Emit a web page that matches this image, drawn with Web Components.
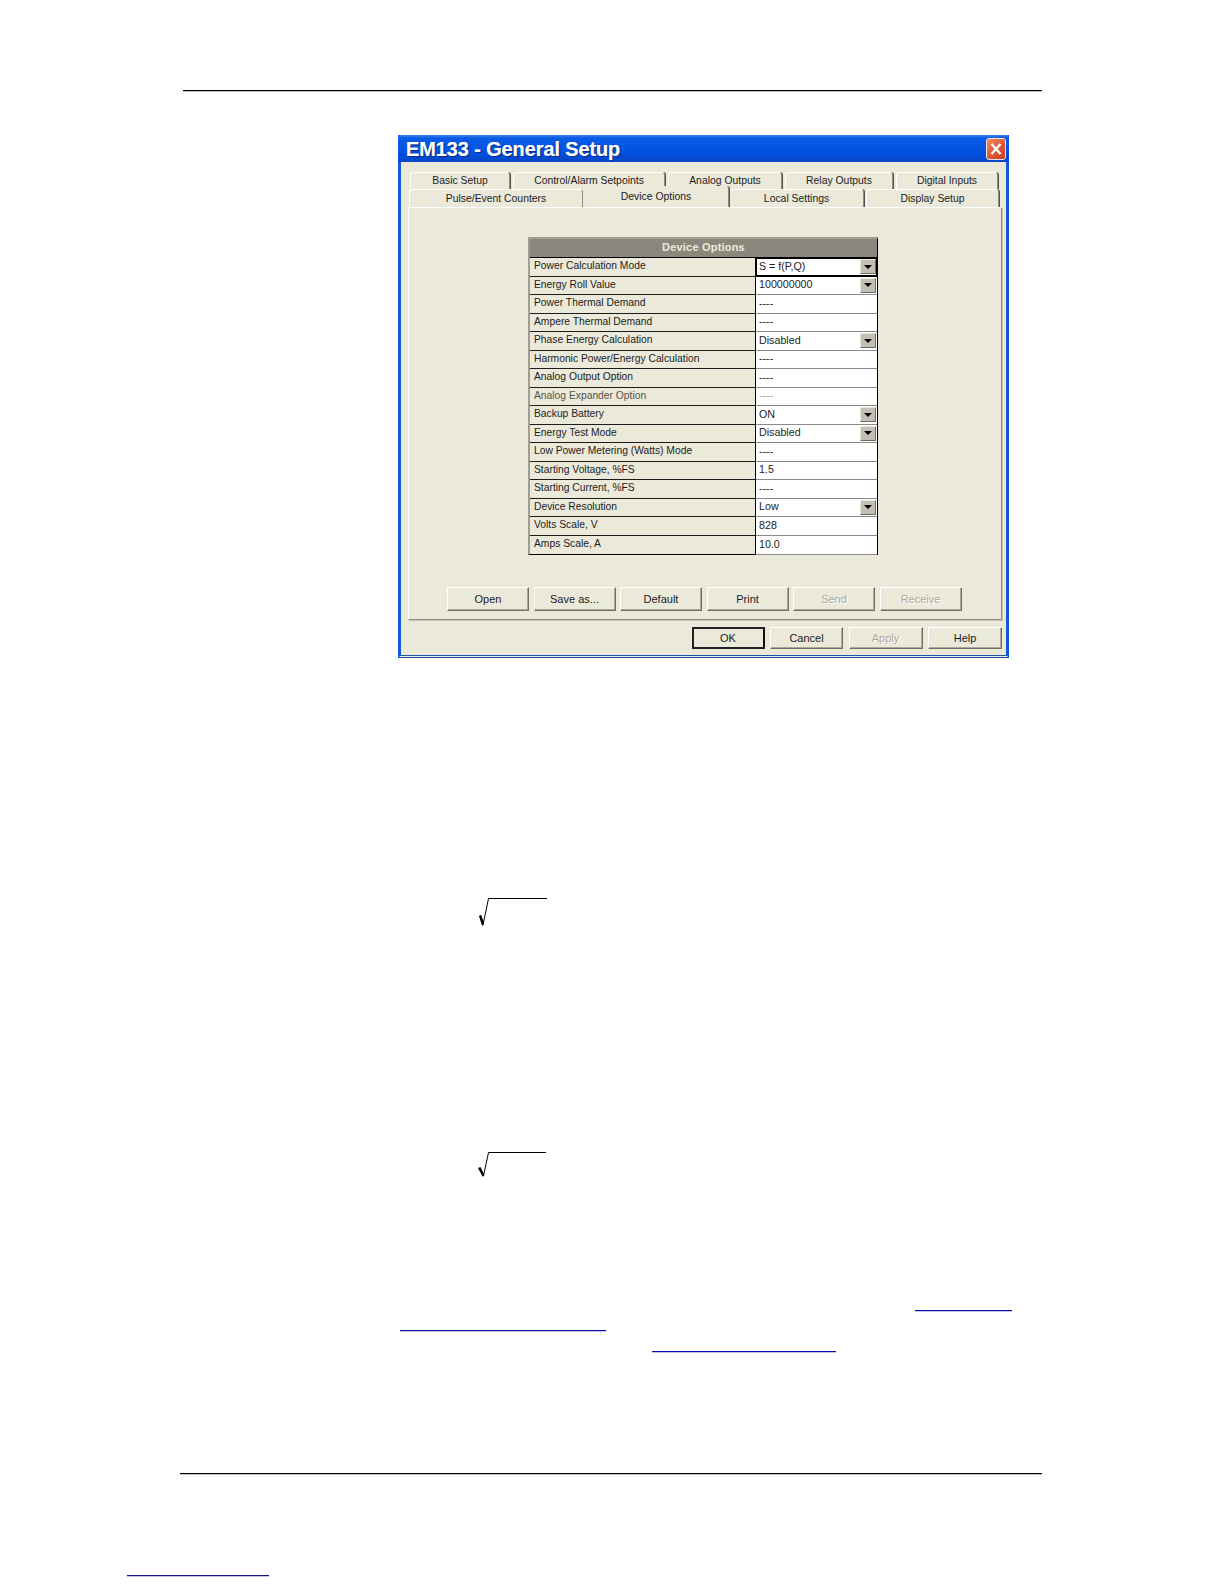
<!DOCTYPE html>
<html>
<head>
<meta charset="utf-8">
<title>EM133 - General Setup</title>
<style>
  html, body { margin: 0; padding: 0; background: #fff; }
  body { font-family: "Liberation Sans", Arial, sans-serif; }
</style>
</head>
<body>
<doc-page>
  <setup-dialog heading="EM133 - General Setup">
    <tab-strip slot="tabs"></tab-strip>
    <option-table heading="Device Options">
      <option-row label="Power Calculation Mode" value="S = f(P,Q)" combo focused></option-row>
      <option-row label="Energy Roll Value" value="100000000" combo></option-row>
      <option-row label="Power Thermal Demand" value="----"></option-row>
      <option-row label="Ampere Thermal Demand" value="----"></option-row>
      <option-row label="Phase Energy Calculation" value="Disabled" combo></option-row>
      <option-row label="Harmonic Power/Energy Calculation" value="----"></option-row>
      <option-row label="Analog Output Option" value="----"></option-row>
      <option-row label="Analog Expander Option" value="----" muted></option-row>
      <option-row label="Backup Battery" value="ON" combo></option-row>
      <option-row label="Energy Test Mode" value="Disabled" combo></option-row>
      <option-row label="Low Power Metering (Watts) Mode" value="----"></option-row>
      <option-row label="Starting Voltage, %FS" value="1.5"></option-row>
      <option-row label="Starting Current, %FS" value="----"></option-row>
      <option-row label="Device Resolution" value="Low" combo></option-row>
      <option-row label="Volts Scale, V" value="828"></option-row>
      <option-row label="Amps Scale, A" value="10.0"></option-row>
    </option-table>
    <win-button slot="actions">Open</win-button>
    <win-button slot="actions">Save as...</win-button>
    <win-button slot="actions">Default</win-button>
    <win-button slot="actions">Print</win-button>
    <win-button slot="actions" disabled>Send</win-button>
    <win-button slot="actions" disabled>Receive</win-button>
    <win-button slot="footer" default style="width:73px">OK</win-button>
    <win-button slot="footer" style="width:73px">Cancel</win-button>
    <win-button slot="footer" disabled style="width:74px">Apply</win-button>
    <win-button slot="footer" style="width:74px">Help</win-button>
  </setup-dialog>
</doc-page>

<script>
class DocPage extends HTMLElement {
  constructor() {
    super();
    this.attachShadow({ mode: 'open' });
    this.shadowRoot.innerHTML = `
      <style>
        :host { display: block; width: 1224px; height: 1584px; overflow: hidden; background: #fff; }
        .rule { height: 1px; background: #000; box-shadow: 0 1px 0 rgba(0,0,0,.25); }
        .top { margin: 90px 0 0 183px; width: 859px; }
        .dialog { margin: 44px 0 0 398px; width: 611px; }
        .root { display: block; width: 70px; height: 30px; margin-left: 478px; }
        .root.one { margin-top: 239px; }
        .root.two { margin-top: 224px; }
        .link { height: 1px; background: #0c0ca8; box-shadow: 0 1px 0 rgba(12,12,168,.25); }
        .l1 { margin: 129px 0 0 915px; width: 97px; }
        .l2 { margin: 19px 0 0 400px; width: 206px; }
        .l3 { margin: 20px 0 0 652px; width: 184px; }
        .bottom { margin: 121px 0 0 180px; width: 862px; }
        .l4 { margin: 101px 0 0 127px; width: 142px; background: #14148c; }
      </style>
      <div class="rule top"></div>
      <div class="dialog"><slot></slot></div>
      <svg class="root one" viewBox="0 0 70 30"><path d="M5 28 L10.500 1.500 H69" fill="none" stroke="#000" stroke-width="1"/><path d="M1 19 L3 17.800 L5.800 25 L5 28.500 L4 28.500 Z" fill="#000"/></svg>
      <svg class="root two" viewBox="0 0 70 30"><path d="M5.500 25 L10.500 1.500 H68" fill="none" stroke="#000" stroke-width="1"/><path d="M0 17 L2.400 16 L6 23 L5.500 25.500 L4.500 25.500 Z" fill="#000"/></svg>
      <div class="link l1"></div>
      <div class="link l2"></div>
      <div class="link l3"></div>
      <div class="rule bottom"></div>
      <div class="link l4"></div>
    `;
  }
}

class SetupDialog extends HTMLElement {
  constructor() {
    super();
    this.attachShadow({ mode: 'open' });
    const heading = this.getAttribute('heading') || '';
    this.shadowRoot.innerHTML = `
      <style>
        :host {
          display: block; box-sizing: border-box; width: 611px; height: 523px;
          background: #ebe9da; border: solid #1259d6; border-width: 0 3px 0 3px;
          border-bottom: 3px double #1f52a8;
          font: 11px "Liberation Sans", Arial, sans-serif; color: #1c1c1c;
        }
        .title {
          display: flex; align-items: center; justify-content: space-between;
          height: 27px; margin: 0 -3px 0 -3px; padding: 2px 3px 0 8px; box-sizing: border-box;
          border-radius: 4px 4px 0 0;
          background: linear-gradient(#3a86f0 0, #0a5ce6 3px, #0352e2 60%, #0246c8 100%);
          color: #fff; font: bold 20px "Liberation Sans", Arial, sans-serif; letter-spacing: -.12px;
          text-shadow: 1px 1px 1px #0a2a80, 0 0 .5px #fff;
        }
        .close {
          display: flex; width: 18px; height: 20px; margin-top: -2px;
          border: 1px solid #f0e4dc; border-radius: 3px;
          background: linear-gradient(135deg, #ee8a64, #dc5430 60%, #c8401c);
        }
        .close svg { width: 18px; height: 20px; }
        .body { padding: 10px 4px 0 7px; }
        .panel {
          box-sizing: border-box; height: 413px; padding: 29px 0 0 119px;
          border: 1px solid; border-color: #fff #8f8d80 #8f8d80 #fff;
          box-shadow: 1px 1px 0 #c9c6b6;
        }
        .actions { display: flex; gap: 4.500px; margin: 32px 0 0 -81px; }
        .footer { display: flex; justify-content: flex-end; gap: 5.500px; margin-top: 7px; }
      </style>
      <div class="title">
        <span>${heading}</span>
        <span class="close"><svg viewBox="0 0 18 20"><path d="M4.500 5 L13.500 15 M13.500 5 L4.500 15" stroke="#fff" stroke-width="2.400" fill="none"/></svg></span>
      </div>
      <div class="body">
        <slot name="tabs"></slot>
        <div class="panel">
          <slot></slot>
          <div class="actions"><slot name="actions"></slot></div>
        </div>
        <div class="footer"><slot name="footer"></slot></div>
      </div>
    `;
  }
}

class TabStrip extends HTMLElement {
  constructor() {
    super();
    this.attachShadow({ mode: 'open' });
    const rows = [
      [['Basic Setup', 100, 3], ['Control/Alarm Setpoints', 152, 3], ['Analog Outputs', 114, 3], ['Relay Outputs', 108, 3], ['Digital Inputs', 102, 4]],
      [['Pulse/Event Counters', 174, 1], ['Device Options', 145, 0, true], ['Local Settings', 135, 2], ['Display Setup', 133, 1]],
    ];
    const markup = rows.map((row, i) => `
      <div class="row r${i}">${row.map(([label, width, gap, active]) => `
        <span class="tab ${active ? 'active' : ''}" style="width:${width}px;margin-right:${gap}px">${label}</span>`).join('')}
      </div>`).join('');
    this.shadowRoot.innerHTML = `
      <style>
        :host { display: block; height: 35px; position: relative; z-index: 1; font-size: 10.400px; }
        .row { display: flex; height: 17px; }
        .r0 { padding-left: 2px; height: 17px; }
        .r1 { padding-left: 1px; height: 18px; }
        .tab {
          box-sizing: border-box; display: flex; align-items: center; justify-content: center;
          padding-bottom: 2px;
          border: 1px solid; border-color: #fff #8f8d80 transparent #fff; border-bottom: 0;
          border-radius: 3px 3px 0 0; white-space: nowrap; background: #ebe9da;
          box-shadow: 1px 0 0 #55534a;
        }
        .r1 .tab { padding-bottom: 0; box-shadow: 0 1px 0 #fff, 1px 0 0 #55534a; }
        .r1 .tab:first-child { box-shadow: 0 1px 0 #fff; }
        .r1 .tab.active {
          height: 21px; margin-top: -3px; padding-bottom: 1px; position: relative;
          box-shadow: 1px 0 0 #55534a; border-left: 0; border-top-color: #ebe9da;
        }
      </style>
      ${markup}
    `;
  }
}

class OptionTable extends HTMLElement {
  constructor() {
    super();
    this.attachShadow({ mode: 'open' });
    const heading = this.getAttribute('heading') || '';
    this.shadowRoot.innerHTML = `
      <style>
        :host {
          display: block; box-sizing: border-box; width: 350px;
          border: solid; border-width: 2px 1px 1px 2px; border-color: #a09e92 #000 #000 #a09e92;
        }
        .head {
          height: 18px; line-height: 17px; text-align: center; background: #8b877c;
          color: #ece9d8; font-weight: bold; letter-spacing: .2px;
          border-bottom: 1px solid #000;
        }
      </style>
      <div class="head">${heading}</div>
      <slot></slot>
    `;
  }
}

class OptionRow extends HTMLElement {
  constructor() {
    super();
    this.attachShadow({ mode: 'open' });
    const label = this.getAttribute('label') || '';
    const value = this.getAttribute('value') || '';
    const combo = this.hasAttribute('combo');
    this.shadowRoot.innerHTML = `
      <style>
        :host {
          display: grid; grid-template-columns: 226px 1fr; box-sizing: border-box; height: 18.500px;
          border-bottom: 1px solid #1c1c1c;
        }
        :host(:last-child) { border-bottom: 0; }
        .label {
          padding-left: 4px; line-height: 15px; white-space: nowrap; border-right: 1px solid #000;
          font-size: 10.300px;
        }
        .value {
          display: flex; align-items: center; justify-content: space-between; font-size: 10.700px;
          background: #fff; padding: 0 1px 0 3px; box-shadow: 0 1px 0 #8a8a8a; white-space: nowrap;
        }
        .value > span:first-child { position: relative; top: -1px; }
        :host([muted]) .label { color: #55534a; }
        :host([muted]) .value { color: #a8a69a; }
        :host([focused]) .value { box-shadow: inset 0 0 0 1px #000, 0 1px 0 #000; }
        .arrow {
          display: flex; align-items: center; justify-content: center; width: 16px; height: 15px;
          background: #c2bfb6; border: 1px solid; border-color: #ece9d8 #6c6a60 #6c6a60 #ece9d8; box-sizing: border-box;
        }
        .arrow i { width: 0; height: 0; border: 4px solid transparent; border-top-color: #000; border-bottom: 0; }
      </style>
      <div class="label">${label}</div>
      <div class="value"><span>${value}</span>${combo ? '<span class="arrow"><i></i></span>' : ''}</div>
    `;
  }
}

class WinButton extends HTMLElement {
  constructor() {
    super();
    this.attachShadow({ mode: 'open' });
    this.shadowRoot.innerHTML = `
      <style>
        :host {
          display: flex; align-items: center; justify-content: center; box-sizing: border-box;
          width: 82px; height: 24px; background: #ebe9da; white-space: nowrap;
          border: 1px solid; border-color: #fff #716f64 #716f64 #fff;
          box-shadow: inset -1px -1px 0 #aca899;
          font-size: 11px;
        }
        :host([slot="footer"]) { height: 22px; }
        :host([default]) { border: 2px solid #222; border-right-color: #111; box-shadow: none; }
        :host([disabled]) { color: #aca899; text-shadow: 1px 1px 0 #fff; }
      </style>
      <slot></slot>
    `;
  }
}

customElements.define('tab-strip', TabStrip);
customElements.define('option-row', OptionRow);
customElements.define('option-table', OptionTable);
customElements.define('win-button', WinButton);
customElements.define('setup-dialog', SetupDialog);
customElements.define('doc-page', DocPage);
</script>
</body>
</html>
